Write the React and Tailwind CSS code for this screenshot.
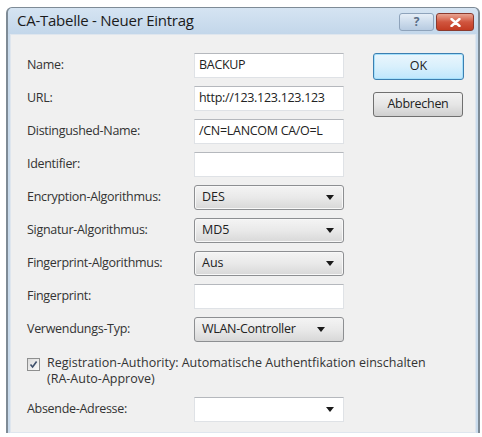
import React from 'react';

const font = { fontFamily: '"Open Sans", "Noto Sans", sans-serif' };

function Caret() {
  return (
    <svg width="8" height="5" viewBox="0 0 8 5" className="shrink-0">
      <path d="M0 0 H8 L4 5 Z" fill="#1a1a1a" />
    </svg>
  );
}

function TextBox({ value }) {
  return (
    <div className="h-[25px] w-[150px] bg-white border border-[#dfe2e6] border-t-[#b5b8bd] flex items-center px-[4px] overflow-hidden whitespace-nowrap text-[12.5px] text-[#222] tracking-[-0.3px]">
      {value}
    </div>
  );
}

function Combo({ value }) {
  return (
    <div className="h-[25px] w-[150px] rounded-[3px] border border-[#8d8f92] bg-gradient-to-b from-[#f4f4f4] via-[#e9e9e9] to-[#d8d8d8] flex items-center justify-between pl-[7px] pr-[9px] text-[12.5px] text-[#222] shadow-[inset_0_0_0_1px_#f8f8f8]">
      <span>{value}</span>
      <Caret />
    </div>
  );
}

function Row({ label, children }) {
  return (
    <div className="h-[33px] flex items-start">
      <div className="w-[167px] h-[25px] flex items-center text-[12.5px] text-[#333] tracking-[-0.3px]">{label}</div>
      {children}
    </div>
  );
}

export default function App() {
  return (
    <div className="w-[482px] h-[437px] bg-white pl-[6px] pt-[7px] overflow-hidden" style={font}>
      <div className="w-[474px] h-[426px] rounded-t-[6px] border-l-2 border-r-2 border-t border-[#7e8b96] bg-[#c9dbec] flex flex-col">
        {/* Title bar */}
        <div className="h-[26px] flex items-start justify-between pl-[9px] pr-[4px] bg-gradient-to-b from-[#d5e4f2] to-[#c3d7ea] rounded-t-[5px]">
          <span className="text-[15px] text-[#1b1b1b] tracking-[-0.25px] leading-[26px] mt-[-1px]">CA-Tabelle - Neuer Eintrag</span>
          <div className="flex gap-[2px] mt-[5px]">
            <div className="w-[35px] h-[18px] rounded-[3px] border border-[#8ea3bb] bg-gradient-to-b from-[#e6eef7] via-[#cddcec] to-[#b7cbe1] flex items-center justify-center text-[12px] font-bold text-[#5a6e86] leading-none">?</div>
            <div className="w-[38px] h-[18px] rounded-[3px] border border-[#8b3a2e] bg-gradient-to-b from-[#e8a493] via-[#d0553e] to-[#c33b22] flex items-center justify-center">
              <svg width="11" height="9" viewBox="0 0 11 9">
                <path d="M1.5 1 L9.5 8 M9.5 1 L1.5 8" stroke="#ffffff" strokeWidth="2.4" strokeLinecap="round" />
              </svg>
            </div>
          </div>
        </div>
        {/* Content */}
        <div className="flex-1 ml-[2px] mr-[2px] border border-[#dfe6ee] bg-[#f0f0f0] pl-[16px] pt-[18px] flex flex-col">
          <div className="flex">
            <div className="flex flex-col">
              <Row label="Name:"><TextBox value="BACKUP" /></Row>
              <Row label="URL:"><TextBox value="http://123.123.123.123" /></Row>
              <Row label="Distingushed-Name:"><TextBox value="/CN=LANCOM CA/O=L" /></Row>
              <Row label="Identifier:"><TextBox value="" /></Row>
              <Row label="Encryption-Algorithmus:"><Combo value="DES" /></Row>
              <Row label="Signatur-Algorithmus:"><Combo value="MD5" /></Row>
              <Row label="Fingerprint-Algorithmus:"><Combo value="Aus" /></Row>
              <Row label="Fingerprint:"><TextBox value="" /></Row>
              <Row label="Verwendungs-Typ:">
                <div className="h-[25px] w-[150px] rounded-[3px] border border-[#8d8f92] bg-gradient-to-b from-[#f4f4f4] via-[#e9e9e9] to-[#d8d8d8] flex items-center pl-[7px] text-[12.5px] text-[#222] tracking-[-0.3px]">
                  <span className="w-[115px]">WLAN-Controller</span>
                  <Caret />
                </div>
              </Row>
            </div>
            <div className="flex flex-col ml-[29px]">
              <div className="w-[91px] h-[27px] rounded-[3px] border border-[#3c7fb1] bg-gradient-to-b from-[#eaf6fd] via-[#d9f0fc] to-[#bee6fd] shadow-[inset_0_0_0_1px_#a5e0fb] flex items-center justify-center text-[12.5px] text-[#222]">OK</div>
              <div className="w-[90px] h-[25px] mt-[12px] rounded-[3px] border border-[#707070] bg-gradient-to-b from-[#f2f2f2] via-[#e6e6e6] to-[#cfcfcf] flex items-center justify-center text-[12.5px] text-[#222] tracking-[-0.3px]">Abbrechen</div>
            </div>
          </div>
          <div className="flex items-start mt-[5px]">
            <div className="w-[13px] h-[13px] mt-[3px] border border-[#8e8f8f] bg-gradient-to-br from-[#dcdcdc] to-[#fafafa] flex items-center justify-center shrink-0">
              <svg width="9" height="9" viewBox="0 0 9 9">
                <path d="M1.5 4.5 L3.6 7 L7.6 1.5" stroke="#3d4f6b" strokeWidth="1.6" fill="none" />
              </svg>
            </div>
            <div className="ml-[7px] text-[12.5px] text-[#333] leading-[16px] whitespace-nowrap">
              Registration-Authority: Automatische Authentfikation einschalten<br />(RA-Auto-Approve)
            </div>
          </div>
          <div className="h-[33px] flex items-start mt-[10px]">
            <div className="w-[167px] h-[25px] flex items-center text-[12.5px] text-[#333] tracking-[-0.3px]">Absende-Adresse:</div>
            <div className="h-[25px] w-[150px] bg-white border border-[#dfe2e6] border-t-[#b5b8bd] flex items-center justify-end pr-[9px]">
              <Caret />
            </div>
          </div>
        </div>
      </div>
    </div>
  );
}
